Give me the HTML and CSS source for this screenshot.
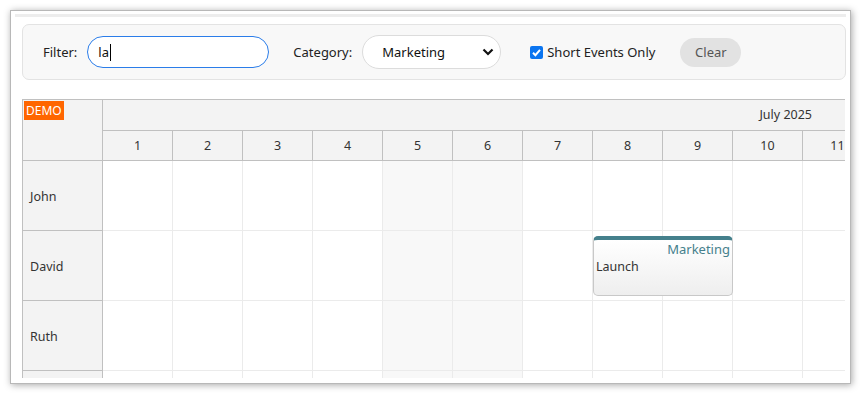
FILE: index.html
```html
<!DOCTYPE html>
<html lang="en">
<head>
    <meta charset="UTF-8">
    <meta name="viewport" content="width=device-width, initial-scale=1.0">
    <title>Scheduler filter</title>
    <link rel="stylesheet" href="styles.css">
</head>
<body>
  <div class="window">
    <div class="strip"></div>
    <div class="content">
      <div class="toolbar">
        <label class="lbl" for="filter">Filter:</label>
        <div class="filter"><span class="typed">la</span><span class="caret"></span></div>
        <label class="lbl lbl-cat">Category:</label>
        <div class="select">
          <span>Marketing</span>
          <svg class="chev" width="12" height="8" viewBox="0 0 12 8"><path d="M1.5 1.5 L6 6 L10.5 1.5" fill="none" stroke="#111" stroke-width="2.2"/></svg>
        </div>
        <div class="check">
          <span class="box"><svg width="13" height="13" viewBox="0 0 13 13"><path d="M3 6.8 L5.4 9.2 L10 3.8" fill="none" stroke="#fff" stroke-width="2"/></svg></span>
          <span>Short Events Only</span>
        </div>
        <button class="clear">Clear</button>
      </div>

      <div class="sched">
        <div class="head">
          <div class="corner"><span class="demo">DEMO</span></div>
          <div class="timeline">
            <div class="month">July 2025</div>
            <div class="days">
              <div class="day">1</div><div class="day">2</div><div class="day">3</div><div class="day">4</div>
              <div class="day">5</div><div class="day">6</div><div class="day">7</div><div class="day">8</div>
              <div class="day">9</div><div class="day">10</div><div class="day">11</div><div class="day">12</div>
            </div>
          </div>
        </div>

        <div class="row">
          <div class="name">John</div>
          <div class="cells">
            <div class="cell"></div><div class="cell"></div><div class="cell"></div><div class="cell"></div>
            <div class="cell we"></div><div class="cell we"></div><div class="cell"></div><div class="cell"></div>
            <div class="cell"></div><div class="cell"></div><div class="cell"></div><div class="cell"></div>
          </div>
        </div>
        <div class="row">
          <div class="name">David</div>
          <div class="cells">
            <div class="cell"></div><div class="cell"></div><div class="cell"></div><div class="cell"></div>
            <div class="cell we"></div><div class="cell we"></div><div class="cell"></div><div class="cell"></div>
            <div class="cell"></div><div class="cell"></div><div class="cell"></div><div class="cell"></div>
            <div class="event">
              <div class="ev-cat">Marketing</div>
              <div class="ev-text">Launch</div>
            </div>
          </div>
        </div>
        <div class="row">
          <div class="name">Ruth</div>
          <div class="cells">
            <div class="cell"></div><div class="cell"></div><div class="cell"></div><div class="cell"></div>
            <div class="cell we"></div><div class="cell we"></div><div class="cell"></div><div class="cell"></div>
            <div class="cell"></div><div class="cell"></div><div class="cell"></div><div class="cell"></div>
          </div>
        </div>
        <div class="row">
          <div class="name"></div>
          <div class="cells">
            <div class="cell"></div><div class="cell"></div><div class="cell"></div><div class="cell"></div>
            <div class="cell we"></div><div class="cell we"></div><div class="cell"></div><div class="cell"></div>
            <div class="cell"></div><div class="cell"></div><div class="cell"></div><div class="cell"></div>
          </div>
        </div>
      </div>
    </div>
  </div>
</body>
</html>
```

FILE: styles.css
```css
body{
  margin: 0;
  background: #fff;
  font-family: "Noto Sans", "Open Sans", sans-serif;
  color: #333;
}

.window{
  margin: 10px;
  width: 841px;
  height: 374px;
  box-sizing: border-box;
  border: 1px solid #b8b8b8;
  box-shadow: 1px 1px 7px rgba(0,0,0,0.35);
  background: #fff;
  overflow: hidden;
}

.strip{
  margin: 3px 4px 0 4px;
  height: 3px;
  background: #ededed;
}

.content{
  padding: 7px 4px 0 11px;
}

/* toolbar */
.toolbar{
  height: 56px;
  box-sizing: border-box;
  border: 1px solid #e3e3e3;
  border-radius: 7px;
  background: #f8f8f8;
  display: flex;
  align-items: center;
  padding-left: 20px;
  font-size: 13px;
  color: #222;
}

.lbl{
  margin-right: 10px;
}

.lbl-cat{
  margin-left: 24px;
}

.filter{
  width: 182px;
  height: 32px;
  box-sizing: border-box;
  border: 1px solid #2b7de9;
  border-radius: 16px;
  background: #fff;
  display: flex;
  align-items: center;
  padding-left: 10px;
  color: #111;
}

.caret{
  width: 1px;
  height: 17px;
  background: #000;
  margin-left: 1px;
}

.select{
  width: 139px;
  height: 34px;
  box-sizing: border-box;
  border: 1px solid #dcdcdc;
  border-radius: 17px;
  background: #fff;
  display: flex;
  align-items: center;
  justify-content: space-between;
  padding: 0 6px 0 19px;
  color: #111;
}

.check{
  display: flex;
  align-items: center;
  margin-left: 29px;
}

.box{
  width: 13px;
  height: 13px;
  border-radius: 2px;
  background: #0b75f0;
  margin-right: 4px;
  display: flex;
}

.clear{
  margin-left: 25px;
  width: 61px;
  height: 29px;
  border: none;
  border-radius: 15px;
  background: #e2e2e2;
  color: #555;
  font-family: inherit;
  font-size: 13px;
  padding: 0;
}

/* scheduler */
.sched{
  margin-top: 19px;
  width: 823px;
  height: 279px;
  box-sizing: border-box;
  border-top: 1px solid #c0c0c0;
  border-left: 1px solid #c0c0c0;
  overflow: hidden;
  font-size: 12.5px;
  color: #333;
}

.head{
  display: flex;
  height: 61px;
  box-sizing: border-box;
  background: #f3f3f3;
  border-bottom: 1px solid #c0c0c0;
}

.corner{
  flex: 0 0 80px;
  box-sizing: border-box;
  border-right: 1px solid #c0c0c0;
  padding: 1px 0 0 1px;
}

.demo{
  display: inline-block;
  background: #ff6600;
  color: #fff;
  font-size: 12px;
  line-height: 19px;
  padding: 0 2px;
}

.timeline{
  flex: 0 0 auto;
}

.month{
  width: 840px;
  height: 31px;
  box-sizing: border-box;
  border-bottom: 1px solid #c0c0c0;
  text-align: right;
  line-height: 30px;
  padding-right: 131px;
}

.days{
  display: flex;
}

.day{
  width: 70px;
  height: 29px;
  box-sizing: border-box;
  border-right: 1px solid #c0c0c0;
  text-align: center;
  line-height: 29px;
}

.row{
  display: flex;
  height: 70px;
}

.name{
  flex: 0 0 80px;
  box-sizing: border-box;
  background: #f3f3f3;
  border-right: 1px solid #c0c0c0;
  border-bottom: 1px solid #c0c0c0;
  padding: 2px 0 0 7px;
  display: flex;
  align-items: center;
}

.cells{
  display: flex;
  position: relative;
}

.cell{
  width: 70px;
  height: 70px;
  box-sizing: border-box;
  border-right: 1px solid #ebebeb;
  border-bottom: 1px solid #ebebeb;
}

.cell.we{
  background: #f8f8f8;
}

.event{
  position: absolute;
  left: 490px;
  top: 5px;
  width: 140px;
  height: 60px;
  box-sizing: border-box;
  border: 1px solid #c8c8c8;
  border-top: 4px solid #45808c;
  border-radius: 5px;
  background: linear-gradient(#ffffff, #eeeeee);
  padding: 1px 2px 0;
}

.ev-cat{
  text-align: right;
  color: #45808c;
  font-size: 13px;
  line-height: 17px;
}

.ev-text{
  color: #333;
  line-height: 18px;
}
```
